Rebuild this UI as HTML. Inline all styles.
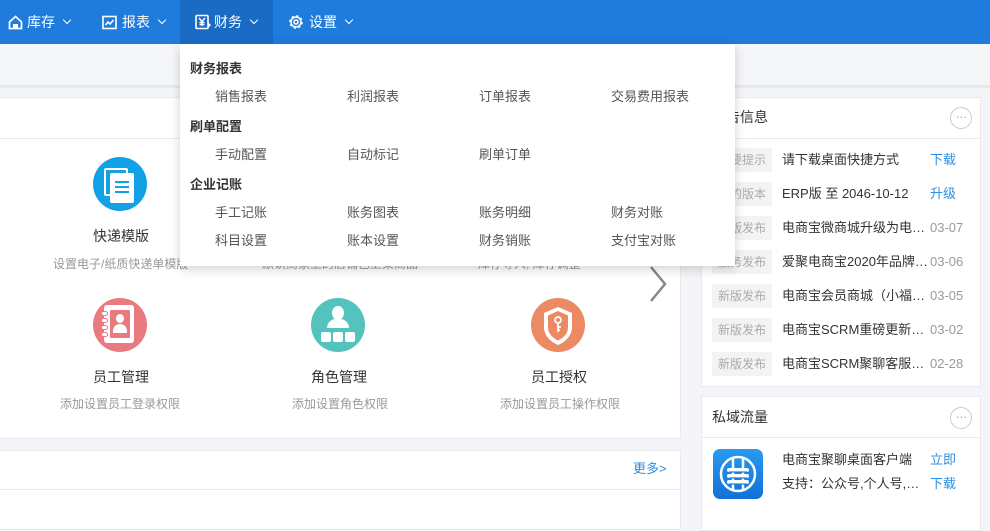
<!DOCTYPE html>
<html><head><meta charset="utf-8"><style>
*{margin:0;padding:0;box-sizing:border-box}
body{width:990px;height:519px;overflow:hidden;background:#f3f5f8;font-family:"Liberation Sans","Noto Sans CJK SC",sans-serif;font-size:13px;color:#333;position:relative;line-height:1.2}
.a{position:absolute}
.top{left:0;top:0;width:990px;height:44px;background:#1f7bdc}
.nav{top:0;height:44px;line-height:44px;color:#fff;font-size:14px;display:flex;align-items:center}
.chev{display:inline-block;width:6px;height:6px;border-right:1.5px solid #fff;border-bottom:1.5px solid #fff;transform:rotate(45deg);margin-left:9px;margin-top:-4px}
.sub{left:0;top:44px;width:990px;height:44px;background:#f5f6f8;border-bottom:3px solid #e6e8eb}
.panel{background:#fff;border:1px solid #e8eaee}
.t{position:absolute;white-space:nowrap}
.ttl{font-size:14px;color:#333}
.gray{color:#999}
.tag{position:absolute;left:10px;width:60px;height:24px;line-height:24px;background:#f2f3f5;color:#aaa;text-align:center;font-size:12px}
.row{position:absolute;left:0;width:278px;height:24px}
.row .t{top:0;line-height:24px;height:24px}
.dd{left:180px;top:44px;width:555px;height:222px;background:#fff;box-shadow:0 3px 10px rgba(0,0,0,.18)}
.dd .h{font-weight:bold;font-size:13px;color:#333}
.dd .i{color:#555}
.more{width:22px;height:22px;border:1.5px solid #ccc;border-radius:50%;text-align:center;line-height:16px;color:#bbb;font-size:14px;letter-spacing:-1px}
</style></head><body>
<div class="a top"></div>
<div class="a" style="left:180px;top:0;width:93px;height:44px;background:#1a6bc4"></div>
<div class="a nav" style="left:8px"><svg width="15" height="15" viewBox="0 0 15 15" style="margin-right:4px"><path d="M1.5 7 L7.5 1.5 L13.5 7 V13.5 H1.5Z" fill="none" stroke="#fff" stroke-width="1.7"/><rect x="5" y="9" width="5" height="4.5" fill="#fff"/></svg>库存<span class="chev"></span></div>
<div class="a nav" style="left:102px"><svg width="15" height="15" viewBox="0 0 15 15" style="margin-right:5px"><rect x="1" y="1.5" width="13" height="12" fill="none" stroke="#fff" stroke-width="1.6"/><path d="M3.5 10 L6 7 L8 9 L11.5 5" fill="none" stroke="#fff" stroke-width="1.6"/></svg>报表<span class="chev"></span></div>
<div class="a nav" style="left:195px"><svg width="16" height="16" viewBox="0 0 16 16" style="margin-right:3px"><rect x="1" y="1.5" width="12" height="13" rx="1" fill="none" stroke="#fff" stroke-width="1.6"/><path d="M4 4 L7 7.5 L10 4 M7 7.5 V12 M4.5 8.5 H9.5 M4.5 10.5 H9.5" fill="none" stroke="#fff" stroke-width="1.4"/><path d="M13 9 L15 11 L13 13" fill="none" stroke="#fff" stroke-width="1.5"/></svg>财务<span class="chev"></span></div>
<div class="a nav" style="left:288px"><svg width="16" height="16" viewBox="0 0 16 16" style="margin-right:5px"><circle cx="8" cy="8" r="5.5" fill="none" stroke="#fff" stroke-width="2.6" stroke-dasharray="2.2 2.1"/><circle cx="8" cy="8" r="5" fill="none" stroke="#fff" stroke-width="1.4"/><circle cx="8" cy="8" r="2" fill="none" stroke="#fff" stroke-width="1.5"/></svg>设置<span class="chev"></span></div>
<div class="a sub"></div>

<div class="a panel" style="left:-1px;top:97px;width:682px;height:342px">
 <div class="a" style="left:0;top:40px;width:680px;height:1px;background:#e8eaee"></div>
</div>
<div class="a" style="left:93px;top:157px;width:54px;height:54px;border-radius:50%;background:#12a0e6"></div>
<div class="a" style="left:104px;top:168px;width:24px;height:28px;border:2px solid #fff;border-radius:2px"></div>
<div class="a" style="left:110px;top:173px;width:24px;height:30px;background:#fff;border-radius:2px"></div>
<div class="a" style="left:115px;top:181px;width:14px;height:12px;border-top:2px solid #12a0e6;border-bottom:2px solid #12a0e6"></div>
<div class="a" style="left:115px;top:186px;width:14px;height:2px;background:#12a0e6"></div>
<div class="t ttl" style="left:93px;top:228px">快递模版</div>
<div class="t gray" style="left:53px;top:257px;font-size:12px">设置电子/纸质快递单模版</div>
<div class="t gray" style="left:262px;top:257px;font-size:12px">默认商家上的店铺已上架商品</div>
<div class="t gray" style="left:478px;top:257px;font-size:12px">库存导入, 库存调整</div>
<svg class="a" style="left:648px;top:265px" width="20" height="38"><path d="M3 2 L17 19 L3 36" fill="none" stroke="#888" stroke-width="2.5"/></svg>

<div class="a" style="left:93px;top:298px;width:54px;height:54px;border-radius:50%;background:#e97b80"></div>
<div class="a" style="left:104px;top:305px;width:30px;height:38px;background:#fff;border-radius:3px"></div>
<div class="a" style="left:110px;top:310px;width:20px;height:28px;background:#e97b80;border-radius:1px"></div>
<div class="a" style="left:101px;top:311px;width:7px;height:5px;border:1.5px solid #e97b80;border-radius:3px;background:#fff"></div>
<div class="a" style="left:101px;top:318px;width:7px;height:5px;border:1.5px solid #e97b80;border-radius:3px;background:#fff"></div>
<div class="a" style="left:101px;top:325px;width:7px;height:5px;border:1.5px solid #e97b80;border-radius:3px;background:#fff"></div>
<div class="a" style="left:101px;top:332px;width:7px;height:5px;border:1.5px solid #e97b80;border-radius:3px;background:#fff"></div>
<div class="a" style="left:116px;top:314px;width:8px;height:9px;border-radius:50%;background:#fff"></div>
<div class="a" style="left:113px;top:324px;width:14px;height:9px;border-radius:7px 7px 0 0;background:#fff"></div>
<div class="t ttl" style="left:93px;top:369px">员工管理</div>
<div class="t gray" style="left:60px;top:397px;font-size:12px">添加设置员工登录权限</div>

<div class="a" style="left:311px;top:298px;width:54px;height:54px;border-radius:50%;background:#55c3bd"></div>
<div class="a" style="left:332px;top:306px;width:12px;height:14px;border-radius:50%;background:#fff"></div>
<div class="a" style="left:327px;top:319px;width:22px;height:9px;border-radius:10px 10px 0 0;background:#fff"></div>
<div class="a" style="left:321px;top:332px;width:10px;height:10px;background:#fff;border-radius:2px"></div>
<div class="a" style="left:333px;top:332px;width:10px;height:10px;background:#fff;border-radius:2px"></div>
<div class="a" style="left:345px;top:332px;width:10px;height:10px;background:#fff;border-radius:2px"></div>
<div class="t ttl" style="left:311px;top:369px">角色管理</div>
<div class="t gray" style="left:292px;top:397px;font-size:12px">添加设置角色权限</div>

<div class="a" style="left:531px;top:298px;width:54px;height:54px;border-radius:50%;background:#ec8a64"></div>
<svg class="a" style="left:540px;top:305px" width="36" height="42"><path d="M18 2 L32 8 V22 C32 31 25 37 18 40 C11 37 4 31 4 22 V8Z" fill="#fff"/><path d="M18 6 L28 10.5 V22 C28 29 23 33 18 35.5 C13 33 8 29 8 22 V10.5Z" fill="#ec8a64"/><circle cx="18" cy="15" r="3" fill="none" stroke="#fff" stroke-width="1.8"/><path d="M18 18 V27 M18 22 H21 M18 25 H20" stroke="#fff" stroke-width="1.8"/></svg>
<div class="t ttl" style="left:531px;top:369px">员工授权</div>
<div class="t gray" style="left:500px;top:397px;font-size:12px">添加设置员工操作权限</div>

<div class="a panel" style="left:-1px;top:450px;width:682px;height:80px">
 <div class="a" style="left:0;top:38px;width:680px;height:1px;background:#e8eaee"></div>
</div>
<div class="t" style="left:633px;top:461px;color:#2f8ee0">更多&gt;</div>

<div class="a panel" style="left:701px;top:97px;width:280px;height:290px">
 <div class="a" style="left:0;top:40px;width:278px;height:1px;background:#e8eaee"></div>
 <div class="t ttl" style="left:10px;top:11px">公告信息</div>
 <div class="a more" style="left:248px;top:9px">···</div>
 <div class="row" style="top:50px"><div class="tag">重要提示</div><div class="t" style="left:80px">请下载桌面快捷方式</div><div class="t" style="left:228px;color:#2f8ee0">下载</div></div>
 <div class="row" style="top:84px"><div class="tag">您的版本</div><div class="t" style="left:80px">ERP版 至 2046-10-12</div><div class="t" style="left:228px;color:#2f8ee0">升级</div></div>
 <div class="row" style="top:118px"><div class="tag">新版发布</div><div class="t" style="left:80px">电商宝微商城升级为电…</div><div class="t gray" style="left:228px">03-07</div></div>
 <div class="row" style="top:152px"><div class="tag">服务发布</div><div class="t" style="left:80px">爱聚电商宝2020年品牌…</div><div class="t gray" style="left:228px">03-06</div></div>
 <div class="row" style="top:186px"><div class="tag">新版发布</div><div class="t" style="left:80px">电商宝会员商城（小福…</div><div class="t gray" style="left:228px">03-05</div></div>
 <div class="row" style="top:220px"><div class="tag">新版发布</div><div class="t" style="left:80px">电商宝SCRM重磅更新…</div><div class="t gray" style="left:228px">03-02</div></div>
 <div class="row" style="top:254px"><div class="tag">新版发布</div><div class="t" style="left:80px">电商宝SCRM聚聊客服…</div><div class="t gray" style="left:228px">02-28</div></div>
</div>

<div class="a panel" style="left:701px;top:396px;width:280px;height:135px">
 <div class="a" style="left:0;top:40px;width:278px;height:1px;background:#e8eaee"></div>
 <div class="t ttl" style="left:10px;top:12px">私域流量</div>
 <div class="a more" style="left:248px;top:10px">···</div>
 <div class="a" style="left:11px;top:52px;width:50px;height:50px;border-radius:7px;background:linear-gradient(#2a9af0,#1170d8)"></div>
 <svg class="a" style="left:15px;top:56px" width="42" height="42"><circle cx="21" cy="21" r="17" fill="none" stroke="#fff" stroke-width="2.5"/><path d="M16 5 V37 M26 5 V37" stroke="#fff" stroke-width="2.5"/><rect x="10" y="15" width="22" height="4" rx="2" fill="#fff"/><rect x="10" y="21" width="22" height="4" rx="2" fill="#fff"/><rect x="10" y="27" width="22" height="4" rx="2" fill="#fff"/><path d="M12 19 H30 M12 25 H30 M12 31 H30" stroke="#1a80e0" stroke-width="1.2"/></svg>
 <div class="t" style="left:80px;top:55px">电商宝聚聊桌面客户端</div>
 <div class="t" style="left:80px;top:79px">支持：公众号,个人号,…</div>
 <div class="t" style="left:228px;top:55px;color:#2f8ee0">立即</div>
 <div class="t" style="left:228px;top:79px;color:#2f8ee0">下载</div>
</div>

<div class="a dd">
 <div class="t h" style="left:10px;top:17px">财务报表</div>
 <div class="t i" style="left:35px;top:45px">销售报表</div><div class="t i" style="left:167px;top:45px">利润报表</div><div class="t i" style="left:299px;top:45px">订单报表</div><div class="t i" style="left:431px;top:45px">交易费用报表</div>
 <div class="t h" style="left:10px;top:75px">刷单配置</div>
 <div class="t i" style="left:35px;top:103px">手动配置</div><div class="t i" style="left:167px;top:103px">自动标记</div><div class="t i" style="left:299px;top:103px">刷单订单</div>
 <div class="t h" style="left:10px;top:133px">企业记账</div>
 <div class="t i" style="left:35px;top:161px">手工记账</div><div class="t i" style="left:167px;top:161px">账务图表</div><div class="t i" style="left:299px;top:161px">账务明细</div><div class="t i" style="left:431px;top:161px">财务对账</div>
 <div class="t i" style="left:35px;top:189px">科目设置</div><div class="t i" style="left:167px;top:189px">账本设置</div><div class="t i" style="left:299px;top:189px">财务销账</div><div class="t i" style="left:431px;top:189px">支付宝对账</div>
</div>
</body></html>
